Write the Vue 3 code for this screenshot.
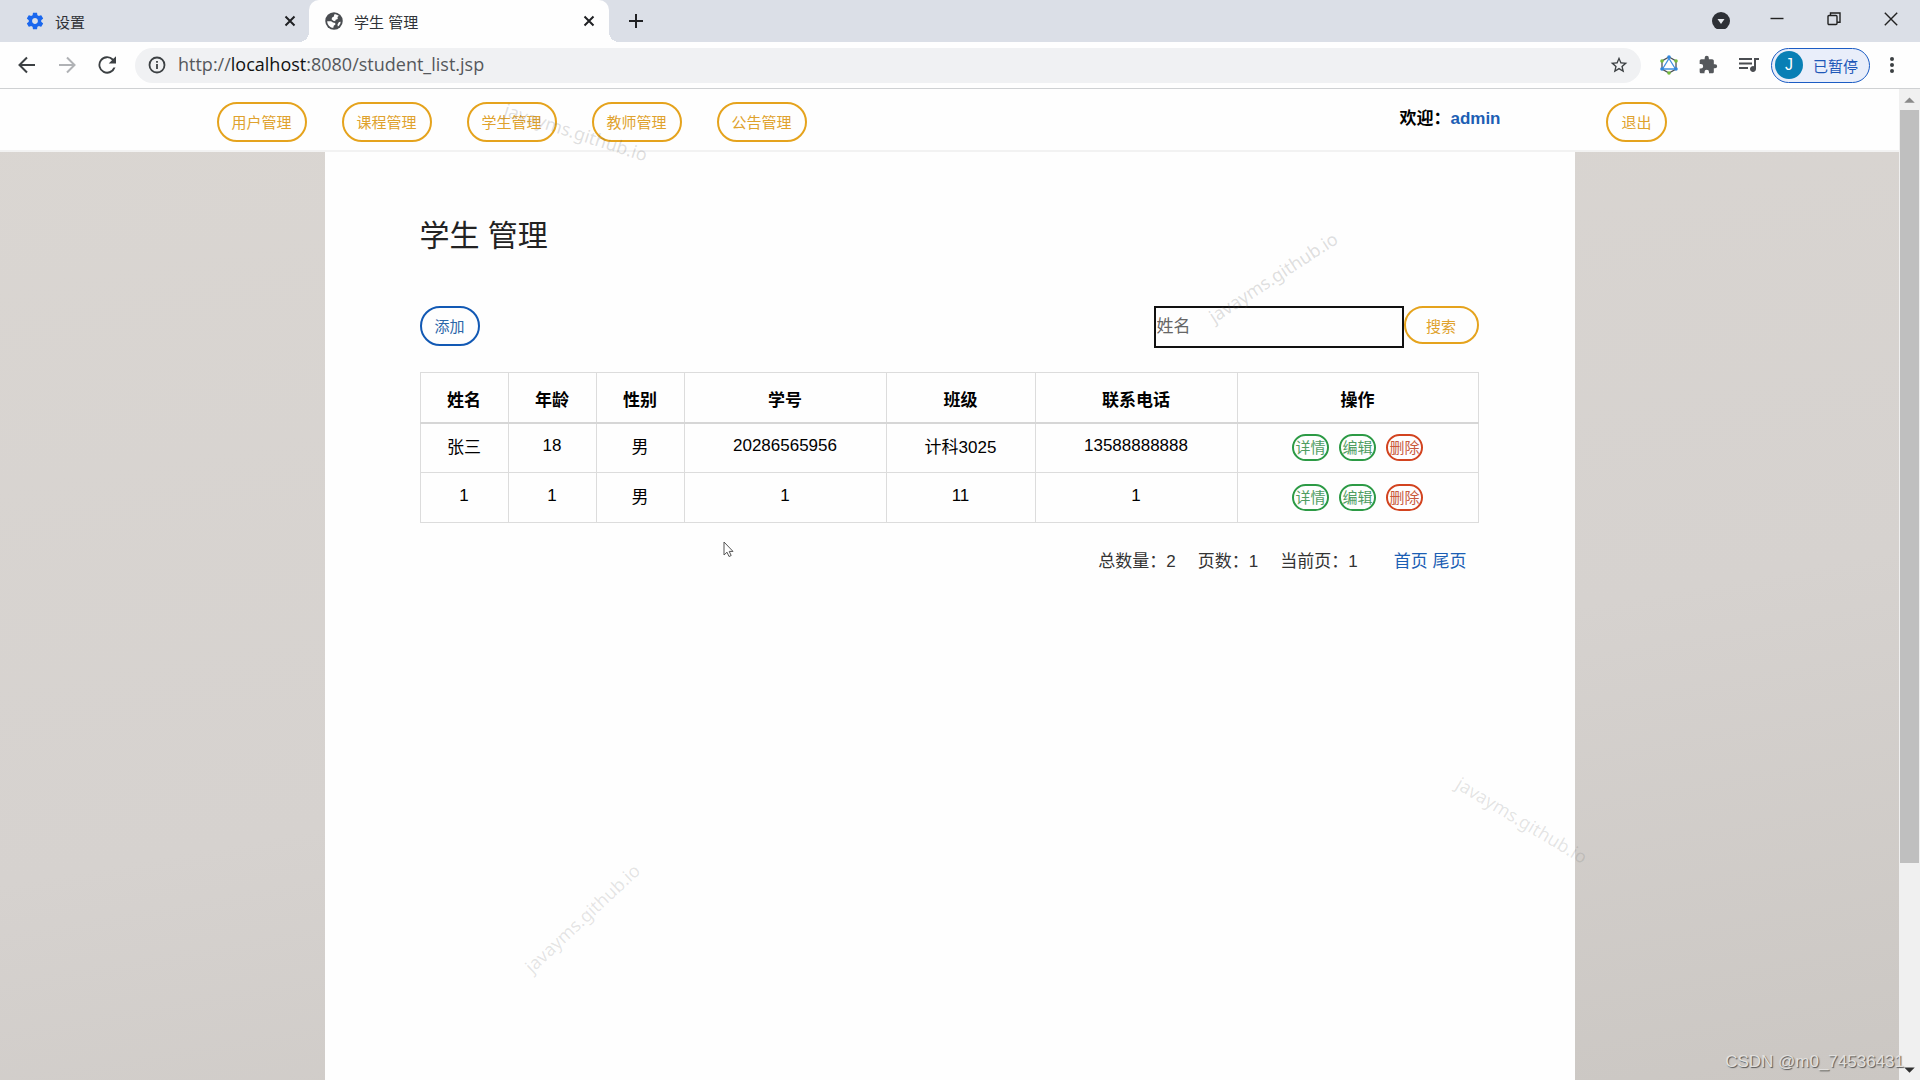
<script setup>
import { ref } from 'vue'

const keyword = ref('')
const navItems = ['用户管理', '课程管理', '学生管理', '教师管理', '公告管理']
const columns = ['姓名', '年龄', '性别', '学号', '班级', '联系电话', '操作']
const students = [
  { name: '张三', age: '18', sex: '男', no: '20286565956', clazz: '计科3025', phone: '13588888888' },
  { name: '1', age: '1', sex: '男', no: '1', clazz: '11', phone: '1' }
]
</script>

<template>
  <div class="browser">
    <div class="tabstrip">
      <div class="tab">
        <svg class="i20" viewBox="0 0 24 24" fill="#1a67ee"><path d="M19.43 12.98c.04-.32.07-.64.07-.98s-.03-.66-.07-.98l2.11-1.65c.19-.15.24-.42.12-.64l-2-3.46c-.12-.22-.39-.3-.61-.22l-2.49 1c-.52-.4-1.08-.73-1.69-.98l-.38-2.65C14.46 2.18 14.25 2 14 2h-4c-.25 0-.46.18-.49.42l-.38 2.65c-.61.25-1.17.59-1.69.98l-2.49-1c-.23-.09-.49 0-.61.22l-2 3.46c-.13.22-.07.49.12.64l2.11 1.65c-.04.32-.07.65-.07.98s.03.66.07.98l-2.11 1.65c-.19.15-.24.42-.12.64l2 3.46c.12.22.39.3.61.22l2.49-1c.52.4 1.08.73 1.69.98l.38 2.65c.03.24.24.42.49.42h4c.25 0 .46-.18.49-.42l.38-2.65c.61-.25 1.17-.59 1.69-.98l2.49 1c.23.09.49 0 .61-.22l2-3.46c.12-.22.07-.49-.12-.64l-2.11-1.65zM12 15.5c-1.93 0-3.5-1.57-3.5-3.5s1.57-3.5 3.5-3.5 3.5 1.57 3.5 3.5-1.57 3.5-3.5 3.5z"/></svg>
        <span class="tab-title">设置</span>
        <button class="icon-btn" aria-label="关闭"><svg class="i12" viewBox="0 0 12 12" stroke="#202124" stroke-width="2" fill="none"><path d="M1.5 1.5l9 9M10.5 1.5l-9 9"/></svg></button>
      </div>
      <div class="tab active">
        <svg class="i20" viewBox="0 0 24 24"><circle cx="12" cy="12" r="10.500" fill="#4a4d51"/><g fill="#fefefe"><path d="M12.500 3.800c2 0 4 .8 5.300 2l-1.600 1.400.3 2.300-2.500.9-.6 1.900-2.400-.5-1.900-1.800.6-2.300 1.900-.7z"/><path d="M3.800 12.200l4.700.1 2.300 1.500 2.600.7.300 1.600-2 1.600-.5 2.500C7 19.800 4 16.400 3.800 12.200z"/><path d="M18 13.200l2-.3c-.3 2.600-1.500 4.500-3.400 5.800l-.4-2.500z"/></g></svg>
        <span class="tab-title">学生 管理</span>
        <button class="icon-btn" aria-label="关闭"><svg class="i12" viewBox="0 0 12 12" stroke="#202124" stroke-width="2" fill="none"><path d="M1.5 1.5l9 9M10.5 1.5l-9 9"/></svg></button>
      </div>
      <button class="icon-btn plus" aria-label="新标签页"><svg class="i16" viewBox="0 0 16 16" stroke="#202124" stroke-width="2" fill="none"><path d="M8 1v14M1 8h14"/></svg></button>
      <div class="window-controls">
        <button class="icon-btn" aria-label="搜索标签页"><svg class="i20" viewBox="0 0 20 20"><circle cx="10" cy="12" r="9" fill="#2d3036"/><path d="M6.500 10h7L10 15z" fill="#e6e9ee"/></svg></button>
        <button class="icon-btn" aria-label="最小化"><svg class="i16" viewBox="0 0 16 16" stroke="#222" stroke-width="1.4" fill="none"><path d="M1.5 7.5h13"/></svg></button>
        <button class="icon-btn" aria-label="还原"><svg class="i16" viewBox="0 0 16 16" stroke="#222" stroke-width="1.4" fill="none"><rect x="2" y="4.5" width="9" height="9" rx="1"/><path d="M4.5 4.5V2H14v9.2h-3"/></svg></button>
        <button class="icon-btn" aria-label="关闭窗口"><svg class="i16" viewBox="0 0 16 16" stroke="#222" stroke-width="1.4" fill="none"><path d="M1.8 1.8l12.4 12.4M14.2 1.8L1.8 14.2"/></svg></button>
      </div>
    </div>

    <div class="toolbar">
      <button class="icon-btn" aria-label="后退"><svg class="i24" viewBox="0 0 24 24" stroke="#3c4043" stroke-width="2" fill="none"><path d="M20 12H5M12 4.5L4.5 12l7.5 7.5"/></svg></button>
      <button class="icon-btn" aria-label="前进"><svg class="i24" viewBox="0 0 24 24" stroke="#b0b2b5" stroke-width="2" fill="none"><path d="M4 12h15M12 4.5l7.5 7.5-7.5 7.5"/></svg></button>
      <button class="icon-btn" aria-label="重新加载"><svg class="i24" viewBox="0 0 24 24" fill="#3c4043"><path d="M18.400 5.800A8.700 8.700 0 1 0 20.500 14.500h-2.100A6.800 6.800 0 1 1 17 7.200L13.700 10.500H21V3.200z"/></svg></button>
      <div class="omnibox">
        <svg class="i20" viewBox="0 0 20 20" fill="none" stroke="#3c4043" stroke-width="1.800"><circle cx="10" cy="10" r="7.500"/><path d="M10 9v5M10 6v1.800"/></svg>
        <span class="url">http://<span class="host">localhost</span>:8080/student_list.jsp</span>
        <button class="icon-btn" aria-label="收藏"><svg class="i20" viewBox="0 0 24 24" fill="#3c4043"><path d="M22 9.240l-7.190-.620L12 2 9.190 8.630 2 9.240l5.460 4.730L5.820 21 12 17.270 18.180 21l-1.630-7.030L22 9.240zM12 15.400l-3.760 2.270 1-4.280-3.320-2.880 4.380-.380L12 6.100l1.710 4.040 4.380.380-3.320 2.880 1 4.280L12 15.400z"/></svg></button>
      </div>
      <button class="icon-btn" aria-label="扩展"><svg class="i20" viewBox="0 0 20 20" fill="none"><path d="M10 2l7 4v8l-7 4-7-4V6z" stroke="#4b5258" stroke-width="1.300"/><path d="M10 3.500L16.500 14h-13z" stroke="#3f8fe0" stroke-width="1.300"/><g fill="#2f86dc"><circle cx="10" cy="2" r="1.800"/><circle cx="3" cy="14" r="1.800"/><circle cx="17" cy="14" r="1.800"/></g><g fill="#74bb3c"><circle cx="3" cy="6" r="1.800"/><circle cx="17" cy="6" r="1.800"/><circle cx="10" cy="18" r="1.800"/></g></svg></button>
      <button class="icon-btn" aria-label="扩展程序"><svg class="i20" viewBox="0 0 24 24" fill="#55585c"><path d="M20.500 11H19V7c0-1.100-.9-2-2-2h-4V3.500a2.500 2.500 0 0 0-5 0V5H4c-1.100 0-1.990.9-1.990 2v3.800H3.500a2.700 2.700 0 0 1 0 5.400H2V20c0 1.100.9 2 2 2h3.800v-1.500a2.700 2.700 0 0 1 5.400 0V22H17c1.100 0 2-.9 2-2v-4h1.500a2.500 2.500 0 0 0 0-5z"/></svg></button>
      <button class="icon-btn" aria-label="媒体"><svg class="i24" viewBox="0 0 24 24" fill="#4a4d51"><path d="M2 5h13v2H2zM2 9.500h13v2H2zM2 14h9v2H2zM17 5h5v2h-3v9a3 3 0 1 1-2-2.820z"/></svg></button>
      <button class="profile"><span class="avatar">J</span><span>已暂停</span></button>
      <button class="icon-btn" aria-label="菜单"><svg class="i20" viewBox="0 0 20 20" fill="#3c4043"><circle cx="10" cy="4" r="2"/><circle cx="10" cy="10" r="2"/><circle cx="10" cy="16" r="2"/></svg></button>
    </div>

    <div class="viewport">
      <div class="page">
        <header class="site-header">
          <div class="header-inner">
            <nav class="nav">
              <button v-for="item in navItems" :key="item" class="pill gold">{{ item }}</button>
            </nav>
            <p class="welcome">欢迎：<a href="#">admin</a></p>
            <button class="pill gold">退出</button>
          </div>
        </header>

        <main class="content">
          <h1>学生 管理</h1>
          <div class="actions">
            <button class="pill blue">添加</button>
            <form class="search" @submit.prevent>
              <input v-model="keyword" type="text" placeholder="姓名" aria-label="姓名">
              <button class="pill gold submit">搜索</button>
            </form>
          </div>
          <table>
            <colgroup>
              <col class="c-short"><col class="c-short"><col class="c-short">
              <col class="c-long"><col class="c-mid"><col class="c-long"><col>
            </colgroup>
            <thead>
              <tr><th v-for="c in columns" :key="c">{{ c }}</th></tr>
            </thead>
            <tbody>
              <tr v-for="s in students" :key="s.no">
                <td>{{ s.name }}</td>
                <td>{{ s.age }}</td>
                <td>{{ s.sex }}</td>
                <td>{{ s.no }}</td>
                <td>{{ s.clazz }}</td>
                <td>{{ s.phone }}</td>
                <td>
                  <div class="row-actions">
                    <button class="mini green">详情</button>
                    <button class="mini green">编辑</button>
                    <button class="mini red">删除</button>
                  </div>
                </td>
              </tr>
            </tbody>
          </table>
          <div class="pager">
            <span>总数量：2</span>
            <span>页数：1</span>
            <span>当前页：1</span>
            <span class="links"><a href="#">首页</a> <a href="#">尾页</a></span>
          </div>
        </main>
      </div>

      <div class="scrollbar">
        <svg class="arrow" viewBox="0 0 20 20"><path d="M5 13l5-5 5 5z" fill="#8a8a8a"/></svg>
        <div class="track"><div class="thumb"></div><div class="rest"></div></div>
        <svg class="arrow" viewBox="0 0 20 20"><path d="M5 8l5 5 5-5z" fill="#303030"/></svg>
      </div>
    </div>

    <span class="mark m1">javayms.github.io</span>
    <span class="mark m2">javayms.github.io</span>
    <span class="mark m3">javayms.github.io</span>
    <span class="mark m4">javayms.github.io</span>
    <span class="credit">CSDN @m0_74536431</span>
    <svg class="cursor" viewBox="0 0 12 18"><path d="M1 1v13l3-2.800 2 4.300 2.200-1-2-4.100H10z" fill="#fff" stroke="#555" stroke-width="1"/></svg>
  </div>
</template>

<style>
body {
  margin: 0;
}
</style>

<style scoped>
.browser {
  position: relative;
  display: flex;
  flex-direction: column;
  min-height: 100vh;
  overflow: hidden;
  background: #fefefe;
  color: #000;
  font-family: "Liberation Sans", "Noto Sans CJK SC", sans-serif;
  font-size: 17px;
}
button {
  font-family: inherit;
  cursor: pointer;
}
svg {
  display: block;
  flex: none;
}
.i12 { width: 12px; height: 12px; }
.i16 { width: 16px; height: 16px; }
.i20 { width: 20px; height: 20px; }
.i24 { width: 24px; height: 24px; }
.icon-btn {
  display: flex;
  padding: 0;
  border: 0;
  background: none;
}

.tabstrip {
  display: flex;
  height: 42px;
  background: #dbdfe7;
}
.tab {
  position: relative;
  display: flex;
  align-items: center;
  gap: 10px;
  box-sizing: border-box;
  width: 300px;
  padding: 0 14px 0 15px;
  font-size: 15px;
  color: #303338;
}
.tab:first-child {
  width: 309px;
  padding: 0 13px 0 25px;
}
.tab.active {
  border-radius: 10px 10px 0 0;
  background: #fefefe;
}
.tab.active::before,
.tab.active::after {
  content: "";
  position: absolute;
  bottom: 0;
  width: 10px;
  height: 10px;
}
.tab.active::before {
  right: 100%;
  background: radial-gradient(circle at 0 0, transparent 10px, #fefefe 10px);
}
.tab.active::after {
  left: 100%;
  background: radial-gradient(circle at 100% 0, transparent 10px, #fefefe 10px);
}
.tab-title {
  flex: 1;
}
.plus {
  align-items: center;
  margin-left: 19px;
}
.window-controls {
  display: flex;
  align-items: center;
  gap: 41px;
  height: 38px;
  margin-left: auto;
  padding-right: 21px;
}
.window-controls .icon-btn:first-child {
  margin-right: -3px;
}

.toolbar {
  display: flex;
  align-items: center;
  gap: 16px;
  height: 46px;
  padding: 0 18px 0 15px;
  border-bottom: 1px solid #cfd1d3;
  background: #fefefe;
}
.omnibox {
  display: flex;
  flex: 1;
  align-items: center;
  gap: 11px;
  box-sizing: border-box;
  height: 35px;
  margin-right: 2px;
  padding: 0 12px 0 12px;
  border-radius: 18px;
  background: #f0f1f3;
}
.url {
  flex: 1;
  font-family: "Open Sans", "Noto Sans", sans-serif;
  font-size: 18px;
  line-height: 24px;
  padding-bottom: 2px;
  color: #55585c;
}
.host {
  color: #111;
}
.toolbar > .icon-btn:nth-of-type(4),
.toolbar > .icon-btn:nth-of-type(5) {
  margin-right: 3px;
}
.profile {
  display: flex;
  align-items: center;
  gap: 10px;
  box-sizing: border-box;
  height: 35px;
  margin-left: -6px;
  margin-right: -4px;
  padding: 0 11px 0 3px;
  border: 1px solid #1b5cc4;
  border-radius: 18px;
  background: #e9eefa;
  font-size: 15px;
  color: #1d57b8;
}
.avatar {
  width: 28px;
  border-radius: 14px;
  background: #087fb5;
  font-size: 16px;
  line-height: 28px;
  text-align: center;
  color: #fff;
}

.viewport {
  display: flex;
  flex: 1;
}
.page {
  display: flex;
  flex: 1;
  flex-direction: column;
  background: linear-gradient(170deg, #dad6d2, #d6d2cf 60%, #cbc7c3);
}
.site-header {
  border-bottom: 2px solid #f2f2f2;
  background: #fefefe;
}
.header-inner {
  display: flex;
  align-items: flex-start;
  box-sizing: border-box;
  max-width: 1466px;
  height: 61px;
  margin: 0 auto;
  padding: 13px 16px 0 0;
}
.nav {
  display: flex;
  gap: 35px;
}
.pill {
  box-sizing: border-box;
  height: 40px;
  padding: 0 13px 2px;
  border: 2px solid;
  border-radius: 20px;
  background: transparent;
  font-size: 15px;
}
.gold {
  border-color: #e5a31d;
  color: #dfa22d;
}
.blue {
  border-color: #1259b4;
  color: #2b66a8;
}
.welcome {
  margin: 0 106px 0 auto;
  font-weight: bold;
  line-height: 34px;
}
a {
  color: #1c5fb4;
  text-decoration: none;
}

.content {
  flex: 1;
  box-sizing: border-box;
  width: 100%;
  max-width: 1250px;
  margin: 0 auto;
  padding: 64px 96px 64px 95px;
  background: #fefefe;
}
h1 {
  margin: 0 0 50px;
  font-size: 30px;
  font-weight: 400;
  line-height: 40px;
  color: #222;
}
.actions {
  display: flex;
  justify-content: space-between;
  align-items: flex-start;
  margin-bottom: 24px;
}
.search {
  display: flex;
  align-items: flex-start;
}
.search input {
  box-sizing: border-box;
  width: 250px;
  height: 42px;
  padding: 0 1px;
  border: 2px solid #111;
  background: transparent;
  font: inherit;
}
.search input::placeholder {
  color: #666;
}
.submit {
  width: 75px;
  height: 38px;
  padding-bottom: 0;
}
table {
  width: 100%;
  border-collapse: collapse;
  table-layout: fixed;
  text-align: center;
}
.c-short { width: 88px; }
.c-mid { width: 149px; }
.c-long { width: 202px; }
th,
td {
  box-sizing: border-box;
  border: 1px solid #dcdcdc;
}
th {
  height: 50px;
  padding: 2px 0 0;
  border-bottom: 2px solid #d6d6d6;
}
td {
  height: 50px;
  padding: 0 0 4px;
}
.row-actions {
  display: flex;
  justify-content: center;
  gap: 10px;
  padding-top: 4px;
}
.mini {
  box-sizing: border-box;
  width: 37px;
  height: 27px;
  padding: 0;
  border: 2px solid;
  border-radius: 14px;
  background: transparent;
  font-size: 15px;
  line-height: 22px;
  white-space: nowrap;
}
.green {
  border-color: #2c9a45;
  color: #4f9d62;
}
.red {
  border-color: #d2431f;
  color: #c95a3c;
}
.pager {
  display: flex;
  justify-content: flex-end;
  gap: 22px;
  margin-top: 26px;
  padding-right: 12px;
  line-height: 26px;
  color: #333;
}
.links {
  margin-left: 14px;
}

.scrollbar {
  display: flex;
  flex-direction: column;
  width: 21px;
  background: #f0f0f0;
}
.arrow {
  width: 21px;
  height: 21px;
}
.track {
  display: flex;
  flex: 1;
  flex-direction: column;
}
.thumb {
  flex: 50;
  margin: 0 1px;
  background: #bfbfbf;
}
.rest {
  flex: 13;
}

/* Stamps and pointer floating over the page */
.mark {
  position: absolute;
  font-family: "Noto Sans", sans-serif;
  font-size: 18px;
  line-height: 24px;
  color: rgba(90, 90, 90, 0.2);
  pointer-events: none;
  transform: translate(-50%, -50%) rotate(var(--tilt));
}
.m1 { left: 576px; top: 132px; --tilt: 18deg; }
.m2 { left: 1273px; top: 277px; --tilt: -33deg; }
.m3 { left: 1522px; top: 820px; --tilt: 31deg; }
.m4 { left: 582px; top: 918px; --tilt: -43deg; }
.m3, .m4 { color: rgba(90, 90, 90, 0.16); }
.credit {
  position: absolute;
  right: 16px;
  bottom: 8px;
  line-height: 20px;
  color: #e2e0de;
  text-shadow: 1px 1px 1px #555;
}
.cursor {
  position: absolute;
  left: 723px;
  top: 541px;
  width: 12px;
  height: 18px;
}
</style>
